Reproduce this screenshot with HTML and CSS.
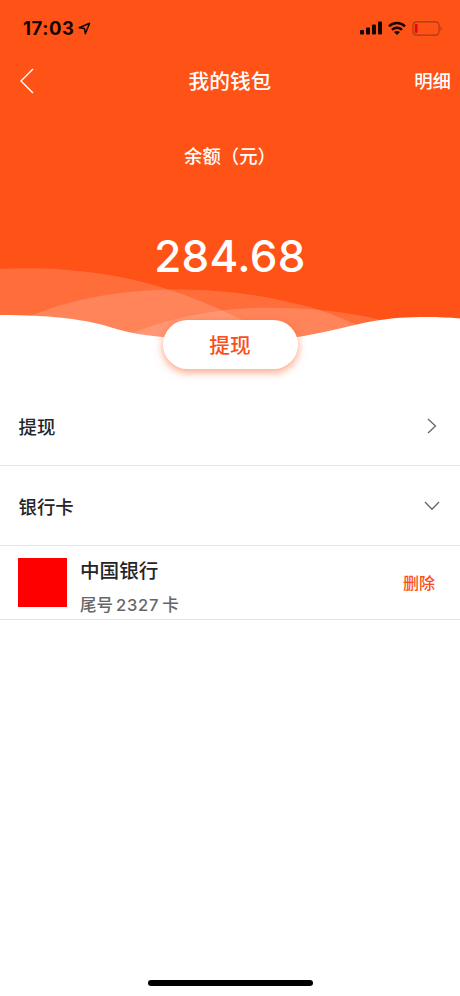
FILE: index.html
```html
<!DOCTYPE html>
<html lang="zh-CN">
<head>
<meta charset="utf-8">
<title>我的钱包</title>
<link rel="stylesheet" href="styles.css">
</head>
<body>
<div class="screen">
  <header class="hero">
    <svg class="waves" viewBox="0 0 460 90" aria-hidden="true">
      <path class="wave" d="M0 14C20 13 48 13 67 15C107 18 140 25 173 36C200 45 230 58 262 75L300 90H0Z"/>
      <path class="wave" d="M33 60C75 43 125 34 183 34.5C225 35 266 40 317 54C334 60 345 65 360 71L300 90H33Z"/>
      <path class="wave" d="M130 79C160 67 198 56 250 53C300 52 340 55 385 66L300 90H130Z"/>
      <path class="ground" d="M0 60C50 60 80 64 105 70.500C130 79 145 80 163 82C190 86 210 87 230 87C260 87 282 84 298 82C325 78 350 70 377 65.500C400 61.500 435 61 460 63.500V90H0Z"/>
    </svg>
    <div class="status">
      <div class="clock">
        <span class="time">17:03</span>
        <svg class="location" viewBox="0 0 13 13"><path d="M1.200 5.700L11.600 1.300L7.300 11.700L6.500 6.400Z"/></svg>
      </div>
      <div class="indicators">
        <svg class="signal" viewBox="0 0 22 14"><rect x="0" y="9" width="4" height="4.500" rx="1"/><rect x="6" y="6.500" width="4" height="7" rx="1"/><rect x="12" y="3.500" width="4" height="10" rx="1"/><rect x="18" y="0.500" width="4" height="13" rx="1"/></svg>
        <svg class="wifi" viewBox="0 0 18 14"><path d="M1 5.300A11.400 11.400 0 0 1 17 5.300M4 8.800A7.200 7.200 0 0 1 14 8.800"/><path class="dot" d="M6 10.900Q9 8.900 12 10.900L9 13.900Z"/></svg>
        <svg class="battery" viewBox="0 0 31 15"><rect class="shell" x="0.900" y="0.900" width="26.200" height="13.200" rx="3.800"/><rect class="charge" x="2.800" y="3" width="2.700" height="9" rx="1.200"/><path class="cap" d="M28.700 5.200Q31 7.500 28.700 9.800Z"/></svg>
      </div>
    </div>
    <nav class="nav">
      <svg class="back" viewBox="0 0 14 26"><path d="M13 1L1 13L13 25"/></svg>
      <h1 class="title">我的钱包</h1>
      <span class="detail">明细</span>
    </nav>
    <p class="label">余额（元）</p>
    <p class="amount">284.68</p>
    <button class="withdraw">提现</button>
  </header>
  <main class="list">
    <div class="row"><span>提现</span><svg class="right" viewBox="0 0 10 16"><path d="M1 1L8.500 8L1 15"/></svg></div>
    <div class="row"><span>银行卡</span><svg class="down" viewBox="0 0 16 10"><path d="M1 1L8 8.300L15 1"/></svg></div>
    <div class="card">
      <div class="logo"></div>
      <div class="info">
        <span class="bank">中国银行</span>
        <span class="tail">尾号<span class="digits">2327</span>卡</span>
      </div>
      <span class="remove">删除</span>
    </div>
  </main>
  <div class="home"></div>
</div>
</body>
</html>
```
FILE: styles.css
```css
* { box-sizing: border-box; }
body {
  margin: 0;
  background: #fff;
  color: #252525;
  font-family: Inter, "Noto Sans CJK SC", sans-serif;
  font-weight: 500;
}
h1, p { margin: 0; }
svg { display: block; fill: none; flex: none; }
.screen {
  width: 460px;
  height: 996px;
  display: flex;
  flex-direction: column;
  overflow: hidden;
}
.hero {
  position: relative;
  height: 345px;
  display: flex;
  flex-direction: column;
  align-items: center;
  background: linear-gradient(#ff5216 0 340px, #fff 340px);
  color: #fff;
  flex: none;
}
.waves { position: absolute; left: 0; bottom: 0; width: 460px; height: 90px; }
.wave { fill: rgba(255, 255, 255, .16); }
.ground { fill: #fff; }
.status {
  width: 100%;
  height: 56px;
  padding: 0 17px 0 23px;
  display: flex;
  align-items: center;
  justify-content: space-between;
  color: #160600;
}
.clock, .indicators { display: flex; align-items: center; }
.clock { gap: 4px; }
.time { font-size: 18.500px; font-weight: 700; line-height: 24px; letter-spacing: .55px; }
.location { width: 13px; height: 13px; stroke: currentColor; stroke-width: 1.500; stroke-linejoin: round; }
.indicators { gap: 6px; }
.signal { width: 22px; height: 14px; fill: currentColor; }
.wifi { width: 18px; height: 14px; stroke: currentColor; stroke-width: 2.500; }
.dot { fill: currentColor; stroke: none; }
.battery { width: 31px; height: 15px; }
.shell { stroke: #a83a14; stroke-width: 1.200; }
.charge { fill: #e80012; }
.cap { fill: #a83a14; }
.nav {
  width: 100%;
  height: 50px;
  padding: 0 9px 0 20px;
  display: grid;
  grid-template-columns: 168.500px auto 1fr;
  align-items: center;
}
.back { width: 14px; height: 26px; stroke: #fff; stroke-width: 1.400; }
.title { padding-top: 2px; font-size: 20.700px; font-weight: 500; line-height: 30px; }
.detail { font-size: 18.400px; line-height: 28px; justify-self: end; }
.label { margin-top: 36px; font-size: 18.400px; line-height: 28px; }
.amount { margin-top: 59px; font-size: 44px; line-height: 54px; letter-spacing: .3px; }
.withdraw {
  position: absolute;
  left: 163px;
  top: 320px;
  width: 135px;
  height: 49px;
  padding: 0 1px 2px 0;
  border: 0;
  border-radius: 25px;
  background: #fff;
  box-shadow: 0 3px 9px rgba(255, 82, 22, .55);
  color: #f8501a;
  font: inherit;
  font-size: 20.700px;
}
.list { padding-top: 41px; flex: 1; }
.row {
  height: 80px;
  padding: 0 20px 0 18.500px;
  display: flex;
  align-items: center;
  justify-content: space-between;
  border-bottom: 1px solid #e4e4e4;
  font-size: 18.400px;
}
.right, .down { stroke: #666; stroke-width: 1.300; }
.right { width: 10px; height: 16px; margin-right: 3px; }
.down { width: 16px; height: 10px; }
.card {
  height: 74px;
  padding: 0 25px 0 18px;
  display: flex;
  align-items: center;
  border-bottom: 1px solid #e4e4e4;
}
.logo { width: 49px; height: 49px; background: #f00; }
.info { margin-left: 13px; padding-top: 10px; display: flex; flex-direction: column; flex: 1; }
.bank { font-size: 19.600px; line-height: 34px; }
.tail { font-size: 16.500px; line-height: 34px; color: #666; }
.digits { letter-spacing: .8px; margin: 0 3px; }
.remove { padding-bottom: 2px; font-size: 16px; color: #f8501a; }
.home { width: 165px; height: 6px; margin: 0 auto 10px; border-radius: 3px; background: #000; flex: none; }
```
